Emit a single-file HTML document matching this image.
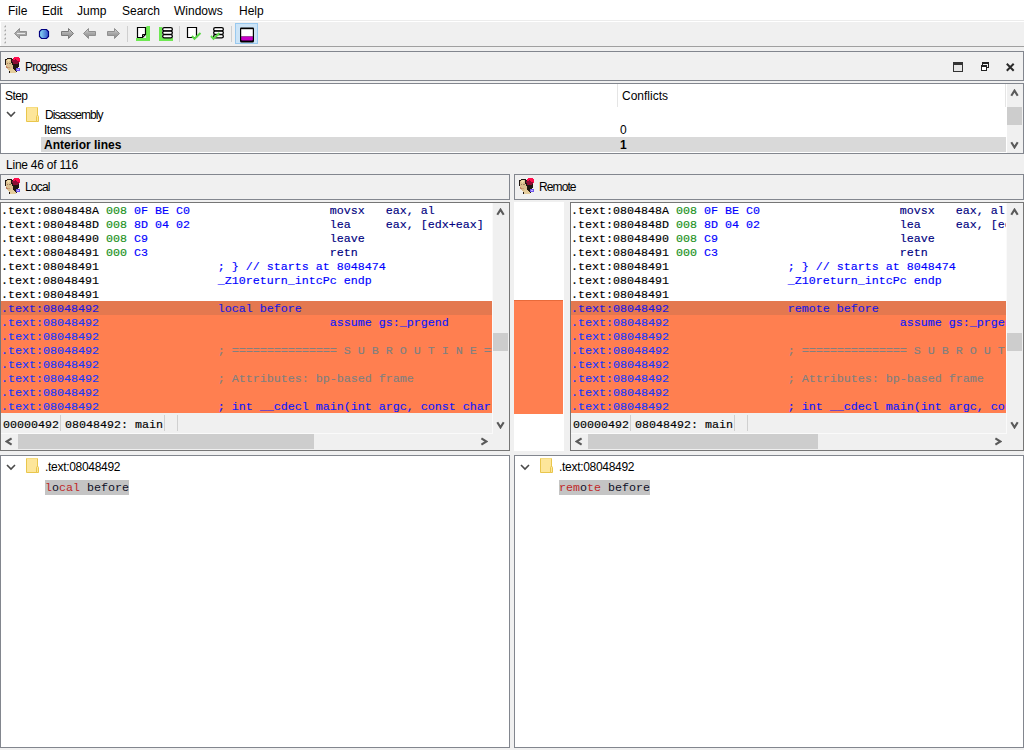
<!DOCTYPE html>
<html><head><meta charset="utf-8">
<style>
*{margin:0;padding:0;box-sizing:border-box}
html,body{width:1024px;height:750px;overflow:hidden;background:#f0f0f0;font-family:"Liberation Sans",sans-serif;font-size:12px;color:#000}
.a{position:absolute}
svg{display:block}
.menu{left:0;top:0;width:1024px;height:20px;background:#fff}
.menu span{position:absolute;top:4px;font-size:12px}
.tb{left:0;top:20px;width:1024px;height:27px;background:#f0f0f0;border-top:1px solid #ececec;border-bottom:1px solid #a0a0a0}
.box{border:1px solid #82868e}
.hdr{background:#f0f0f0}
.white{background:#fff}
.code{font-family:"Liberation Mono",monospace;font-size:11.67px;line-height:14px;-webkit-text-stroke:0.15px currentColor;white-space:pre;overflow:hidden}
.code i{font-style:normal;position:relative;top:1px}
.row{position:absolute;left:0;height:14px;width:100%}
.ck{color:#000} .cg{color:#189018} .cb{color:#0000ff} .cn{color:#000080} .cn2{color:#000080} .cgr{color:#808080}
.ro{background:#ff7f50} .rh{background:#e4784f}
.ro .co{color:#1438ff} .rh .ch{color:#1a1ae0} .ro .cn2{color:#0a1aff}
.vs{background:#f0f0f0}
.thumb{background:#cdcdcd}
</style></head><body>
<!-- menu -->
<div class="a menu">
<span style="left:8px">File</span>
<span style="left:42px">Edit</span>
<span style="left:77px">Jump</span>
<span style="left:122px">Search</span>
<span style="left:174px">Windows</span>
<span style="left:239px">Help</span>
</div>
<div class="a tb"></div>
<div class="a" style="left:0;top:21px;width:1024px;height:1px;background:#fff"></div>
<div class="a" style="left:0;top:21px;width:1px;height:25px;background:#fff"></div>
<svg class="a" style="left:0;top:0" width="262" height="47" viewBox="0 0 262 47">
<defs>
<linearGradient id="gb" x1="0" x2="1" y1="0" y2="0"><stop offset="0" stop-color="#8fe0f8"/><stop offset="1" stop-color="#3050c8"/></linearGradient>
<linearGradient id="ga" x1="0" x2="0" y1="0" y2="1"><stop offset="0" stop-color="#d8d8d8"/><stop offset="0.5" stop-color="#a8a8a8"/><stop offset="1" stop-color="#888"/></linearGradient>
</defs>
<g fill="#a8a8a8"><path d="M6 25 L6 27.2 L3.8 27.2 Z"/><path d="M6 29 L6 31.2 L3.8 31.2 Z"/><path d="M6 33 L6 35.2 L3.8 35.2 Z"/><path d="M6 37 L6 39.2 L3.8 39.2 Z"/><path d="M6 41 L6 43.2 L3.8 43.2 Z"/></g>
<!-- back arrow (light) -->
<path d="M14.5 33.5 L19.5 28.5 L19.5 31.5 L26.5 31.5 L26.5 35.5 L19.5 35.5 L19.5 38.5 Z" fill="#a8a8a8" stroke="#909090" stroke-width="1"/>
<path d="M17 33.5 L25 33.5" stroke="#e8e8e8" stroke-width="1"/>
<!-- blue circle -->
<path d="M41.5 29.5 L46.5 29.5 L48.5 31.5 L48.5 36.5 L46.5 38.5 L41.5 38.5 L39.5 36.5 L39.5 31.5 Z" fill="url(#gb)" stroke="#000080" stroke-width="1.2"/>
<!-- right arrow 1 -->
<path d="M73.5 33.5 L68.5 28.5 L68.5 31.5 L61.5 31.5 L61.5 35.5 L68.5 35.5 L68.5 38.5 Z" fill="url(#ga)" stroke="#7a7a7a" stroke-width="1"/>
<!-- left arrow 2 -->
<path d="M83.5 33.5 L88.5 28.5 L88.5 31.5 L95.5 31.5 L95.5 35.5 L88.5 35.5 L88.5 38.5 Z" fill="url(#ga)" stroke="#909090" stroke-width="1"/>
<!-- right arrow 3 -->
<path d="M119.5 33.5 L114.5 28.5 L114.5 31.5 L107.5 31.5 L107.5 35.5 L114.5 35.5 L114.5 38.5 Z" fill="url(#ga)" stroke="#909090" stroke-width="1"/>
<g fill="#cfcfcf"><rect x="127" y="26" width="1" height="16"/><rect x="179" y="26" width="1" height="16"/><rect x="231" y="26" width="1" height="16"/></g>
<!-- page + green L -->
<path d="M146 27 L147 26 L150 26 L150 41 L136 41 L136 38 L146 38 Z" fill="#6ee852"/>
<path d="M137.5 27.5 L145.5 27.5 L145.5 34.5 L142.5 37.5 L137.5 37.5 Z" fill="#fff" stroke="#000" stroke-width="1.2"/>
<path d="M142.5 37.5 L142.5 34.5 L145.5 34.5" fill="none" stroke="#000" stroke-width="1"/>
<!-- stack + green L -->
<path d="M159 27 L162 27 L162 38 L173 38 L173 41 L159 41 Z" fill="#6ee852"/>
<g fill="#fff" stroke="#000" stroke-width="1.3"><rect x="162.65" y="27.65" width="9.7" height="3.2" rx="1.6"/><rect x="162.65" y="31.15" width="9.7" height="3.2" rx="1.6"/><rect x="162.65" y="34.65" width="9.7" height="3.2" rx="1.6"/></g>
<!-- page check -->
<path d="M187.5 27.5 L196.5 27.5 L196.5 37.5 L187.5 37.5 Z" fill="#fff" stroke="#000" stroke-width="1.2"/>
<path d="M192 36 L194.5 38.8 L200.5 33" fill="none" stroke="#5cd848" stroke-width="2"/>
<!-- stack check -->
<g fill="#fff" stroke="#000" stroke-width="1.3"><rect x="213.65" y="27.65" width="9.7" height="3.2" rx="1.6"/><rect x="213.65" y="31.15" width="9.7" height="3.2" rx="1.6"/><rect x="213.65" y="34.65" width="9.7" height="3.2" rx="1.6"/></g>
<path d="M211 36 L213.5 38.8 L219.5 33" fill="none" stroke="#5cd848" stroke-width="2"/>
<!-- pressed button -->
<rect x="235.5" y="23.5" width="22" height="20" fill="#cce4f7" stroke="#99c9ef" stroke-width="1"/>
<path d="M241 27.5 L253 27.5 Q254 27.5 254 28.5 L254 41 Q254 42.5 252.5 42.5 L241.5 42.5 Q240 42.5 240 41 L240 28.5 Q240 27.5 241 27.5 Z" fill="#000"/>
<rect x="241.2" y="29.2" width="11.6" height="7.3" fill="#fff"/>
<rect x="241.2" y="36.5" width="11.6" height="4" rx="0.8" fill="#c800c8"/>
</svg>


<!-- Progress dock header -->
<div class="a box hdr" style="left:0;top:51px;width:1024px;height:30px"></div>
<div class="a" style="left:4px;top:57px"><svg width="16" height="16" viewBox="0 0 16 16" shape-rendering="crispEdges"><rect x="10" y="0" width="5" height="1" fill="#ff0c4c"/><rect x="3" y="1" width="5" height="1" fill="#1e1612"/><rect x="9" y="1" width="7" height="1" fill="#ff0c4c"/><rect x="1" y="2" width="2" height="1" fill="#1e1612"/><rect x="3" y="2" width="1" height="1" fill="#dcc090"/><rect x="4" y="2" width="2" height="1" fill="#f0dcaa"/><rect x="6" y="2" width="1" height="1" fill="#dcc090"/><rect x="7" y="2" width="2" height="1" fill="#1e1612"/><rect x="9" y="2" width="2" height="1" fill="#ff0c4c"/><rect x="11" y="2" width="1" height="1" fill="#8c0c34"/><rect x="12" y="2" width="4" height="1" fill="#ff0c4c"/><rect x="1" y="3" width="1" height="1" fill="#1e1612"/><rect x="2" y="3" width="1" height="1" fill="#dcc090"/><rect x="3" y="3" width="3" height="1" fill="#f0dcaa"/><rect x="6" y="3" width="1" height="1" fill="#dcc090"/><rect x="7" y="3" width="1" height="1" fill="#1e1612"/><rect x="8" y="3" width="5" height="1" fill="#8c0c34"/><rect x="13" y="3" width="3" height="1" fill="#ff0c4c"/><rect x="1" y="4" width="1" height="1" fill="#1e1612"/><rect x="2" y="4" width="2" height="1" fill="#dcc090"/><rect x="4" y="4" width="1" height="1" fill="#f0dcaa"/><rect x="5" y="4" width="2" height="1" fill="#dcc090"/><rect x="7" y="4" width="1" height="1" fill="#1e1612"/><rect x="8" y="4" width="7" height="1" fill="#8c0c34"/><rect x="15" y="4" width="1" height="1" fill="#ff0c4c"/><rect x="1" y="5" width="1" height="1" fill="#1e1612"/><rect x="2" y="5" width="5" height="1" fill="#dcc090"/><rect x="7" y="5" width="2" height="1" fill="#1e1612"/><rect x="9" y="5" width="6" height="1" fill="#8c0c34"/><rect x="1" y="6" width="1" height="1" fill="#1e1612"/><rect x="2" y="6" width="6" height="1" fill="#dcc090"/><rect x="8" y="6" width="1" height="1" fill="#1e1612"/><rect x="9" y="6" width="5" height="1" fill="#8c0c34"/><rect x="14" y="6" width="1" height="1" fill="#1e1612"/><rect x="1" y="7" width="1" height="1" fill="#1e1612"/><rect x="2" y="7" width="6" height="1" fill="#dcc090"/><rect x="8" y="7" width="7" height="1" fill="#1e1612"/><rect x="2" y="8" width="7" height="1" fill="#dcc090"/><rect x="9" y="8" width="6" height="1" fill="#1e1612"/><rect x="2" y="9" width="1" height="1" fill="#c08060"/><rect x="3" y="9" width="6" height="1" fill="#dcc090"/><rect x="9" y="9" width="6" height="1" fill="#1e1612"/><rect x="2" y="10" width="2" height="1" fill="#c08060"/><rect x="4" y="10" width="5" height="1" fill="#dcc090"/><rect x="9" y="10" width="5" height="1" fill="#1e1612"/><rect x="3" y="11" width="4" height="1" fill="#dcc090"/><rect x="7" y="11" width="2" height="1" fill="#e4cc9c"/><rect x="9" y="11" width="3" height="1" fill="#1e1612"/><rect x="12" y="11" width="4" height="1" fill="#7058ee"/><rect x="4" y="12" width="2" height="1" fill="#dcc090"/><rect x="6" y="12" width="4" height="1" fill="#e4cc9c"/><rect x="10" y="12" width="2" height="1" fill="#1e1612"/><rect x="12" y="12" width="1" height="1" fill="#7058ee"/><rect x="13" y="12" width="2" height="1" fill="#c8b8ff"/><rect x="15" y="12" width="1" height="1" fill="#7058ee"/><rect x="5" y="13" width="6" height="1" fill="#e4cc9c"/><rect x="11" y="13" width="1" height="1" fill="#1e1612"/><rect x="12" y="13" width="4" height="1" fill="#7058ee"/><rect x="5" y="14" width="1" height="1" fill="#1e1612"/><rect x="6" y="14" width="6" height="1" fill="#e4cc9c"/><rect x="12" y="14" width="1" height="1" fill="#1e1612"/><rect x="5" y="15" width="1" height="1" fill="#1e1612"/><rect x="6" y="15" width="6" height="1" fill="#e4cc9c"/><rect x="3" y="6" width="1" height="1" fill="#a08060"/><rect x="5" y="6" width="2" height="1" fill="#a08060"/><rect x="4" y="10" width="2" height="1" fill="#c8a078"/></svg></div>
<div class="a" style="left:25px;top:60px;letter-spacing:-0.8px">Progress</div>
<div class="a" style="left:953px;top:62px;width:10px;height:10px;border:1px solid #333;border-top-width:3px;background:#e6e6e6"></div>
<div class="a" style="left:982px;top:62px;width:7px;height:6px;border:1px solid #222;border-top-width:2px"></div>
<div class="a" style="left:981px;top:65px;width:6px;height:6px;border:1px solid #222;border-top-width:2px;background:#fff"></div>
<div class="a" style="left:1006px;top:63px"><svg width="9" height="9" viewBox="0 0 9 9"><path d="M0.8 0.8 L7.7 7.7 M7.7 0.8 L0.8 7.7" stroke="#2a2a2a" stroke-width="2"/></svg></div>

<!-- Progress tree -->
<div class="a box white" style="left:0;top:83px;width:1024px;height:71px"></div>
<div class="a" style="left:5px;top:89px;letter-spacing:-0.6px">Step</div>
<div class="a" style="left:617px;top:84px;width:1px;height:23px;background:#e5e5e5"></div>
<div class="a" style="left:622px;top:89px">Conflicts</div>
<div class="a" style="left:6px;top:111px"><svg width="10" height="7" viewBox="0 0 10 7"><path d="M1 1 L5 5 L9 1" fill="none" stroke="#4a4a4a" stroke-width="1.6"/></svg></div>
<div class="a" style="left:26px;top:107px"><svg width="14" height="16" viewBox="0 0 14 16">
<path d="M0.5 0.5 L11.5 0.5 L11.5 14.5 L0.5 14.5 Z" fill="#fde69a" stroke="#e9c64c"/>
<path d="M0.5 0.5 L11.5 0.5" stroke="#f6dc80"/>
<path d="M10.5 14.5 L10.5 9.5 Q10.5 8.5 11.5 8.5 Q12.5 8.5 12.5 9.5 L12.5 14.5 Z" fill="#fde69a" stroke="#e9c64c"/>
</svg></div>
<div class="a" style="left:45px;top:108px;letter-spacing:-0.95px">Disassembly</div>
<div class="a" style="left:44px;top:123px;letter-spacing:-0.5px">Items</div>
<div class="a" style="left:41px;top:137px;width:965px;height:15px;background:#d9d9d9"></div>
<div class="a" style="left:44px;top:138px;font-weight:bold">Anterior lines</div>
<div class="a" style="left:620px;top:123px">0</div>
<div class="a" style="left:620px;top:138px;font-weight:bold">1</div>
<div class="a" style="left:1005px;top:84px;width:1px;height:23px;background:#e5e5e5"></div>
<div class="a vs" style="left:1007px;top:84px;width:16px;height:69px"></div>
<div class="a" style="left:1010px;top:89px"><svg width="9" height="8" viewBox="0 0 9 8"><path d="M1.3 6.8 L4.5 1.6 L7.7 6.8" fill="none" stroke="#5a5a5a" stroke-width="2.1"/></svg></div>
<div class="a thumb" style="left:1007px;top:107px;width:15px;height:18px"></div>
<div class="a" style="left:1010px;top:141px"><svg width="9" height="8" viewBox="0 0 9 8"><path d="M1.3 1.2 L4.5 6.4 L7.7 1.2" fill="none" stroke="#5a5a5a" stroke-width="2.1"/></svg></div>

<div class="a" style="left:6px;top:158px;letter-spacing:-0.23px">Line 46 of 116</div>

<!-- Local header -->
<div class="a box hdr" style="left:0;top:174px;width:510px;height:26px"></div>
<div class="a" style="left:4px;top:178px"><svg width="16" height="16" viewBox="0 0 16 16" shape-rendering="crispEdges"><rect x="10" y="0" width="5" height="1" fill="#ff0c4c"/><rect x="3" y="1" width="5" height="1" fill="#1e1612"/><rect x="9" y="1" width="7" height="1" fill="#ff0c4c"/><rect x="1" y="2" width="2" height="1" fill="#1e1612"/><rect x="3" y="2" width="1" height="1" fill="#dcc090"/><rect x="4" y="2" width="2" height="1" fill="#f0dcaa"/><rect x="6" y="2" width="1" height="1" fill="#dcc090"/><rect x="7" y="2" width="2" height="1" fill="#1e1612"/><rect x="9" y="2" width="2" height="1" fill="#ff0c4c"/><rect x="11" y="2" width="1" height="1" fill="#8c0c34"/><rect x="12" y="2" width="4" height="1" fill="#ff0c4c"/><rect x="1" y="3" width="1" height="1" fill="#1e1612"/><rect x="2" y="3" width="1" height="1" fill="#dcc090"/><rect x="3" y="3" width="3" height="1" fill="#f0dcaa"/><rect x="6" y="3" width="1" height="1" fill="#dcc090"/><rect x="7" y="3" width="1" height="1" fill="#1e1612"/><rect x="8" y="3" width="5" height="1" fill="#8c0c34"/><rect x="13" y="3" width="3" height="1" fill="#ff0c4c"/><rect x="1" y="4" width="1" height="1" fill="#1e1612"/><rect x="2" y="4" width="2" height="1" fill="#dcc090"/><rect x="4" y="4" width="1" height="1" fill="#f0dcaa"/><rect x="5" y="4" width="2" height="1" fill="#dcc090"/><rect x="7" y="4" width="1" height="1" fill="#1e1612"/><rect x="8" y="4" width="7" height="1" fill="#8c0c34"/><rect x="15" y="4" width="1" height="1" fill="#ff0c4c"/><rect x="1" y="5" width="1" height="1" fill="#1e1612"/><rect x="2" y="5" width="5" height="1" fill="#dcc090"/><rect x="7" y="5" width="2" height="1" fill="#1e1612"/><rect x="9" y="5" width="6" height="1" fill="#8c0c34"/><rect x="1" y="6" width="1" height="1" fill="#1e1612"/><rect x="2" y="6" width="6" height="1" fill="#dcc090"/><rect x="8" y="6" width="1" height="1" fill="#1e1612"/><rect x="9" y="6" width="5" height="1" fill="#8c0c34"/><rect x="14" y="6" width="1" height="1" fill="#1e1612"/><rect x="1" y="7" width="1" height="1" fill="#1e1612"/><rect x="2" y="7" width="6" height="1" fill="#dcc090"/><rect x="8" y="7" width="7" height="1" fill="#1e1612"/><rect x="2" y="8" width="7" height="1" fill="#dcc090"/><rect x="9" y="8" width="6" height="1" fill="#1e1612"/><rect x="2" y="9" width="1" height="1" fill="#c08060"/><rect x="3" y="9" width="6" height="1" fill="#dcc090"/><rect x="9" y="9" width="6" height="1" fill="#1e1612"/><rect x="2" y="10" width="2" height="1" fill="#c08060"/><rect x="4" y="10" width="5" height="1" fill="#dcc090"/><rect x="9" y="10" width="5" height="1" fill="#1e1612"/><rect x="3" y="11" width="4" height="1" fill="#dcc090"/><rect x="7" y="11" width="2" height="1" fill="#e4cc9c"/><rect x="9" y="11" width="3" height="1" fill="#1e1612"/><rect x="12" y="11" width="4" height="1" fill="#7058ee"/><rect x="4" y="12" width="2" height="1" fill="#dcc090"/><rect x="6" y="12" width="4" height="1" fill="#e4cc9c"/><rect x="10" y="12" width="2" height="1" fill="#1e1612"/><rect x="12" y="12" width="1" height="1" fill="#7058ee"/><rect x="13" y="12" width="2" height="1" fill="#c8b8ff"/><rect x="15" y="12" width="1" height="1" fill="#7058ee"/><rect x="5" y="13" width="6" height="1" fill="#e4cc9c"/><rect x="11" y="13" width="1" height="1" fill="#1e1612"/><rect x="12" y="13" width="4" height="1" fill="#7058ee"/><rect x="5" y="14" width="1" height="1" fill="#1e1612"/><rect x="6" y="14" width="6" height="1" fill="#e4cc9c"/><rect x="12" y="14" width="1" height="1" fill="#1e1612"/><rect x="5" y="15" width="1" height="1" fill="#1e1612"/><rect x="6" y="15" width="6" height="1" fill="#e4cc9c"/><rect x="3" y="6" width="1" height="1" fill="#a08060"/><rect x="5" y="6" width="2" height="1" fill="#a08060"/><rect x="4" y="10" width="2" height="1" fill="#c8a078"/></svg></div>
<div class="a" style="left:25px;top:180px;letter-spacing:-0.8px">Local</div>
<!-- Remote header -->
<div class="a box hdr" style="left:514px;top:174px;width:510px;height:26px"></div>
<div class="a" style="left:518px;top:178px"><svg width="16" height="16" viewBox="0 0 16 16" shape-rendering="crispEdges"><rect x="10" y="0" width="5" height="1" fill="#ff0c4c"/><rect x="3" y="1" width="5" height="1" fill="#1e1612"/><rect x="9" y="1" width="7" height="1" fill="#ff0c4c"/><rect x="1" y="2" width="2" height="1" fill="#1e1612"/><rect x="3" y="2" width="1" height="1" fill="#dcc090"/><rect x="4" y="2" width="2" height="1" fill="#f0dcaa"/><rect x="6" y="2" width="1" height="1" fill="#dcc090"/><rect x="7" y="2" width="2" height="1" fill="#1e1612"/><rect x="9" y="2" width="2" height="1" fill="#ff0c4c"/><rect x="11" y="2" width="1" height="1" fill="#8c0c34"/><rect x="12" y="2" width="4" height="1" fill="#ff0c4c"/><rect x="1" y="3" width="1" height="1" fill="#1e1612"/><rect x="2" y="3" width="1" height="1" fill="#dcc090"/><rect x="3" y="3" width="3" height="1" fill="#f0dcaa"/><rect x="6" y="3" width="1" height="1" fill="#dcc090"/><rect x="7" y="3" width="1" height="1" fill="#1e1612"/><rect x="8" y="3" width="5" height="1" fill="#8c0c34"/><rect x="13" y="3" width="3" height="1" fill="#ff0c4c"/><rect x="1" y="4" width="1" height="1" fill="#1e1612"/><rect x="2" y="4" width="2" height="1" fill="#dcc090"/><rect x="4" y="4" width="1" height="1" fill="#f0dcaa"/><rect x="5" y="4" width="2" height="1" fill="#dcc090"/><rect x="7" y="4" width="1" height="1" fill="#1e1612"/><rect x="8" y="4" width="7" height="1" fill="#8c0c34"/><rect x="15" y="4" width="1" height="1" fill="#ff0c4c"/><rect x="1" y="5" width="1" height="1" fill="#1e1612"/><rect x="2" y="5" width="5" height="1" fill="#dcc090"/><rect x="7" y="5" width="2" height="1" fill="#1e1612"/><rect x="9" y="5" width="6" height="1" fill="#8c0c34"/><rect x="1" y="6" width="1" height="1" fill="#1e1612"/><rect x="2" y="6" width="6" height="1" fill="#dcc090"/><rect x="8" y="6" width="1" height="1" fill="#1e1612"/><rect x="9" y="6" width="5" height="1" fill="#8c0c34"/><rect x="14" y="6" width="1" height="1" fill="#1e1612"/><rect x="1" y="7" width="1" height="1" fill="#1e1612"/><rect x="2" y="7" width="6" height="1" fill="#dcc090"/><rect x="8" y="7" width="7" height="1" fill="#1e1612"/><rect x="2" y="8" width="7" height="1" fill="#dcc090"/><rect x="9" y="8" width="6" height="1" fill="#1e1612"/><rect x="2" y="9" width="1" height="1" fill="#c08060"/><rect x="3" y="9" width="6" height="1" fill="#dcc090"/><rect x="9" y="9" width="6" height="1" fill="#1e1612"/><rect x="2" y="10" width="2" height="1" fill="#c08060"/><rect x="4" y="10" width="5" height="1" fill="#dcc090"/><rect x="9" y="10" width="5" height="1" fill="#1e1612"/><rect x="3" y="11" width="4" height="1" fill="#dcc090"/><rect x="7" y="11" width="2" height="1" fill="#e4cc9c"/><rect x="9" y="11" width="3" height="1" fill="#1e1612"/><rect x="12" y="11" width="4" height="1" fill="#7058ee"/><rect x="4" y="12" width="2" height="1" fill="#dcc090"/><rect x="6" y="12" width="4" height="1" fill="#e4cc9c"/><rect x="10" y="12" width="2" height="1" fill="#1e1612"/><rect x="12" y="12" width="1" height="1" fill="#7058ee"/><rect x="13" y="12" width="2" height="1" fill="#c8b8ff"/><rect x="15" y="12" width="1" height="1" fill="#7058ee"/><rect x="5" y="13" width="6" height="1" fill="#e4cc9c"/><rect x="11" y="13" width="1" height="1" fill="#1e1612"/><rect x="12" y="13" width="4" height="1" fill="#7058ee"/><rect x="5" y="14" width="1" height="1" fill="#1e1612"/><rect x="6" y="14" width="6" height="1" fill="#e4cc9c"/><rect x="12" y="14" width="1" height="1" fill="#1e1612"/><rect x="5" y="15" width="1" height="1" fill="#1e1612"/><rect x="6" y="15" width="6" height="1" fill="#e4cc9c"/><rect x="3" y="6" width="1" height="1" fill="#a08060"/><rect x="5" y="6" width="2" height="1" fill="#a08060"/><rect x="4" y="10" width="2" height="1" fill="#c8a078"/></svg></div>
<div class="a" style="left:539px;top:180px;letter-spacing:-0.9px">Remote</div>

<!-- Local disasm -->
<div class="a box white" style="left:0;top:202px;width:510px;height:249px;border-color:#767676"></div>
<div class="a code" style="left:1px;top:203px;width:491px;height:210px"><div class="row" style="top:0px"><i class="ck">.text:0804848A </i><i class="cg">008 </i><i class="cb">0F BE C0</i>                    <i class="cn">movsx   eax, al</i></div>
<div class="row" style="top:14px"><i class="ck">.text:0804848D </i><i class="cg">008 </i><i class="cb">8D 04 02</i>                    <i class="cn">lea     eax, [edx+eax]</i></div>
<div class="row" style="top:28px"><i class="ck">.text:08048490 </i><i class="cg">008 </i><i class="cb">C9</i>                          <i class="cn">leave</i></div>
<div class="row" style="top:42px"><i class="ck">.text:08048491 </i><i class="cg">000 </i><i class="cb">C3</i>                          <i class="cn">retn</i></div>
<div class="row" style="top:56px"><i class="ck">.text:08048491</i>                 <i class="cb">; } // starts at 8048474</i></div>
<div class="row" style="top:70px"><i class="ck">.text:08048491</i>                 <i class="cb">_Z10return_intcPc endp</i></div>
<div class="row" style="top:84px"><i class="ck">.text:08048491</i></div>
<div class="row rh" style="top:98px"><i class="ch">.text:08048492</i>                 <i class="ch">local before</i></div>
<div class="row ro" style="top:112px"><i class="co">.text:08048492</i>                                 <i class="cn2">assume gs:_prgend</i></div>
<div class="row ro" style="top:126px"><i class="co">.text:08048492</i></div>
<div class="row ro" style="top:140px"><i class="co">.text:08048492</i>                 <i class="cgr">; =============== S U B R O U T I N E =======================================</i></div>
<div class="row ro" style="top:154px"><i class="co">.text:08048492</i></div>
<div class="row ro" style="top:168px"><i class="co">.text:08048492</i>                 <i class="cgr">; Attributes: bp-based frame</i></div>
<div class="row ro" style="top:182px"><i class="co">.text:08048492</i></div>
<div class="row ro" style="top:196px"><i class="co">.text:08048492</i>                 <i class="cn2">; int __cdecl main(int argc, const char **argv, const char **envp)</i></div></div>
<div class="a" style="left:1px;top:413px;width:491px;height:20px;background:#f0f0f0"></div>
<div class="a" style="left:492px;top:203px;width:1px;height:231px;background:#fafafa"></div>
<div class="a" style="left:1px;top:433px;width:492px;height:1px;background:#fafafa"></div>
<div class="a code" style="left:3px;top:418px;color:#000">00000492</div>
<div class="a" style="left:60px;top:415px;width:1px;height:16px;background:#d0d0d0"></div>
<div class="a code" style="left:65px;top:418px;color:#000">08048492: main</div>
<div class="a" style="left:164px;top:415px;width:1px;height:16px;background:#d0d0d0"></div>
<div class="a" style="left:177px;top:415px;width:1px;height:16px;background:#d0d0d0"></div>
<div class="a vs" style="left:493px;top:203px;width:16px;height:247px"></div>
<div class="a" style="left:496px;top:208px"><svg width="9" height="8" viewBox="0 0 9 8"><path d="M1.3 6.8 L4.5 1.6 L7.7 6.8" fill="none" stroke="#5a5a5a" stroke-width="2.1"/></svg></div>
<div class="a thumb" style="left:493px;top:333px;width:15px;height:18px"></div>
<div class="a" style="left:496px;top:421px"><svg width="9" height="8" viewBox="0 0 9 8"><path d="M1.3 1.2 L4.5 6.4 L7.7 1.2" fill="none" stroke="#5a5a5a" stroke-width="2.1"/></svg></div>
<div class="a vs" style="left:1px;top:434px;width:492px;height:16px"></div>
<div class="a" style="left:5px;top:437px"><svg width="8" height="9" viewBox="0 0 8 9"><path d="M6.6 1.3 L1.6 4.5 L6.6 7.7" fill="none" stroke="#5a5a5a" stroke-width="2.1"/></svg></div>
<div class="a thumb" style="left:18px;top:434px;width:296px;height:15px"></div>
<div class="a" style="left:480px;top:437px"><svg width="8" height="9" viewBox="0 0 8 9"><path d="M1.4 1.3 L6.4 4.5 L1.4 7.7" fill="none" stroke="#5a5a5a" stroke-width="2.1"/></svg></div>

<!-- middle strip -->
<div class="a white" style="left:514px;top:202px;width:50px;height:249px"></div>
<div class="a" style="left:514px;top:300px;width:49px;height:114px;background:#ff7f50;border-top:1px solid #e86a3a"></div>

<!-- Remote disasm -->
<div class="a box white" style="left:570px;top:202px;width:454px;height:249px;border-color:#767676"></div>
<div class="a code" style="left:571px;top:203px;width:435px;height:210px"><div class="row" style="top:0px"><i class="ck">.text:0804848A </i><i class="cg">008 </i><i class="cb">0F BE C0</i>                    <i class="cn">movsx   eax, al</i></div>
<div class="row" style="top:14px"><i class="ck">.text:0804848D </i><i class="cg">008 </i><i class="cb">8D 04 02</i>                    <i class="cn">lea     eax, [edx+eax]</i></div>
<div class="row" style="top:28px"><i class="ck">.text:08048490 </i><i class="cg">008 </i><i class="cb">C9</i>                          <i class="cn">leave</i></div>
<div class="row" style="top:42px"><i class="ck">.text:08048491 </i><i class="cg">000 </i><i class="cb">C3</i>                          <i class="cn">retn</i></div>
<div class="row" style="top:56px"><i class="ck">.text:08048491</i>                 <i class="cb">; } // starts at 8048474</i></div>
<div class="row" style="top:70px"><i class="ck">.text:08048491</i>                 <i class="cb">_Z10return_intcPc endp</i></div>
<div class="row" style="top:84px"><i class="ck">.text:08048491</i></div>
<div class="row rh" style="top:98px"><i class="ch">.text:08048492</i>                 <i class="ch">remote before</i></div>
<div class="row ro" style="top:112px"><i class="co">.text:08048492</i>                                 <i class="cn2">assume gs:_prgend</i></div>
<div class="row ro" style="top:126px"><i class="co">.text:08048492</i></div>
<div class="row ro" style="top:140px"><i class="co">.text:08048492</i>                 <i class="cgr">; =============== S U B R O U T I N E =======================================</i></div>
<div class="row ro" style="top:154px"><i class="co">.text:08048492</i></div>
<div class="row ro" style="top:168px"><i class="co">.text:08048492</i>                 <i class="cgr">; Attributes: bp-based frame</i></div>
<div class="row ro" style="top:182px"><i class="co">.text:08048492</i></div>
<div class="row ro" style="top:196px"><i class="co">.text:08048492</i>                 <i class="cn2">; int __cdecl main(int argc, const char **argv, const char **envp)</i></div></div>
<div class="a" style="left:571px;top:413px;width:435px;height:20px;background:#f0f0f0"></div>
<div class="a" style="left:1006px;top:203px;width:1px;height:231px;background:#fafafa"></div>
<div class="a" style="left:571px;top:433px;width:436px;height:1px;background:#fafafa"></div>
<div class="a code" style="left:573px;top:418px;color:#000">00000492</div>
<div class="a" style="left:630px;top:415px;width:1px;height:16px;background:#d0d0d0"></div>
<div class="a code" style="left:635px;top:418px;color:#000">08048492: main</div>
<div class="a" style="left:734px;top:415px;width:1px;height:16px;background:#d0d0d0"></div>
<div class="a" style="left:747px;top:415px;width:1px;height:16px;background:#d0d0d0"></div>
<div class="a vs" style="left:1007px;top:203px;width:16px;height:247px"></div>
<div class="a" style="left:1010px;top:208px"><svg width="9" height="8" viewBox="0 0 9 8"><path d="M1.3 6.8 L4.5 1.6 L7.7 6.8" fill="none" stroke="#5a5a5a" stroke-width="2.1"/></svg></div>
<div class="a thumb" style="left:1007px;top:333px;width:15px;height:18px"></div>
<div class="a" style="left:1010px;top:421px"><svg width="9" height="8" viewBox="0 0 9 8"><path d="M1.3 1.2 L4.5 6.4 L7.7 1.2" fill="none" stroke="#5a5a5a" stroke-width="2.1"/></svg></div>
<div class="a vs" style="left:571px;top:434px;width:436px;height:16px"></div>
<div class="a" style="left:575px;top:437px"><svg width="8" height="9" viewBox="0 0 8 9"><path d="M6.6 1.3 L1.6 4.5 L6.6 7.7" fill="none" stroke="#5a5a5a" stroke-width="2.1"/></svg></div>
<div class="a thumb" style="left:588px;top:434px;width:230px;height:15px"></div>
<div class="a" style="left:994px;top:437px"><svg width="8" height="9" viewBox="0 0 8 9"><path d="M1.4 1.3 L6.4 4.5 L1.4 7.7" fill="none" stroke="#5a5a5a" stroke-width="2.1"/></svg></div>

<!-- lower panes -->
<div class="a box white" style="left:0;top:455px;width:510px;height:293px"></div>
<div class="a" style="left:6px;top:464px"><svg width="10" height="7" viewBox="0 0 10 7"><path d="M1 1 L5 5 L9 1" fill="none" stroke="#4a4a4a" stroke-width="1.6"/></svg></div>
<div class="a" style="left:26px;top:458px"><svg width="14" height="16" viewBox="0 0 14 16">
<path d="M0.5 0.5 L11.5 0.5 L11.5 14.5 L0.5 14.5 Z" fill="#fde69a" stroke="#e9c64c"/>
<path d="M0.5 0.5 L11.5 0.5" stroke="#f6dc80"/>
<path d="M10.5 14.5 L10.5 9.5 Q10.5 8.5 11.5 8.5 Q12.5 8.5 12.5 9.5 L12.5 14.5 Z" fill="#fde69a" stroke="#e9c64c"/>
</svg></div>
<div class="a" style="left:45px;top:460px;letter-spacing:-0.3px">.text:08048492</div>
<div class="a code" style="left:45px;top:480px;background:#c4c4c4;-webkit-text-stroke:0;padding:0 0 0 0;height:15px;line-height:15px"><i style="color:#c02828;font-style:normal">l</i><i style="color:#101028;font-style:normal">o</i><i style="color:#c02828;font-style:normal">cal</i> <i style="color:#101028;font-style:normal">before</i></div>

<div class="a box white" style="left:514px;top:455px;width:510px;height:293px"></div>
<div class="a" style="left:520px;top:464px"><svg width="10" height="7" viewBox="0 0 10 7"><path d="M1 1 L5 5 L9 1" fill="none" stroke="#4a4a4a" stroke-width="1.6"/></svg></div>
<div class="a" style="left:540px;top:458px"><svg width="14" height="16" viewBox="0 0 14 16">
<path d="M0.5 0.5 L11.5 0.5 L11.5 14.5 L0.5 14.5 Z" fill="#fde69a" stroke="#e9c64c"/>
<path d="M0.5 0.5 L11.5 0.5" stroke="#f6dc80"/>
<path d="M10.5 14.5 L10.5 9.5 Q10.5 8.5 11.5 8.5 Q12.5 8.5 12.5 9.5 L12.5 14.5 Z" fill="#fde69a" stroke="#e9c64c"/>
</svg></div>
<div class="a" style="left:559px;top:460px;letter-spacing:-0.3px">.text:08048492</div>
<div class="a code" style="left:559px;top:480px;background:#c4c4c4;-webkit-text-stroke:0;height:15px;line-height:15px"><i style="color:#c02828;font-style:normal">rem</i><i style="color:#101028;font-style:normal">o</i><i style="color:#c02828;font-style:normal">te</i> <i style="color:#101028;font-style:normal">before</i></div>
</body></html>
